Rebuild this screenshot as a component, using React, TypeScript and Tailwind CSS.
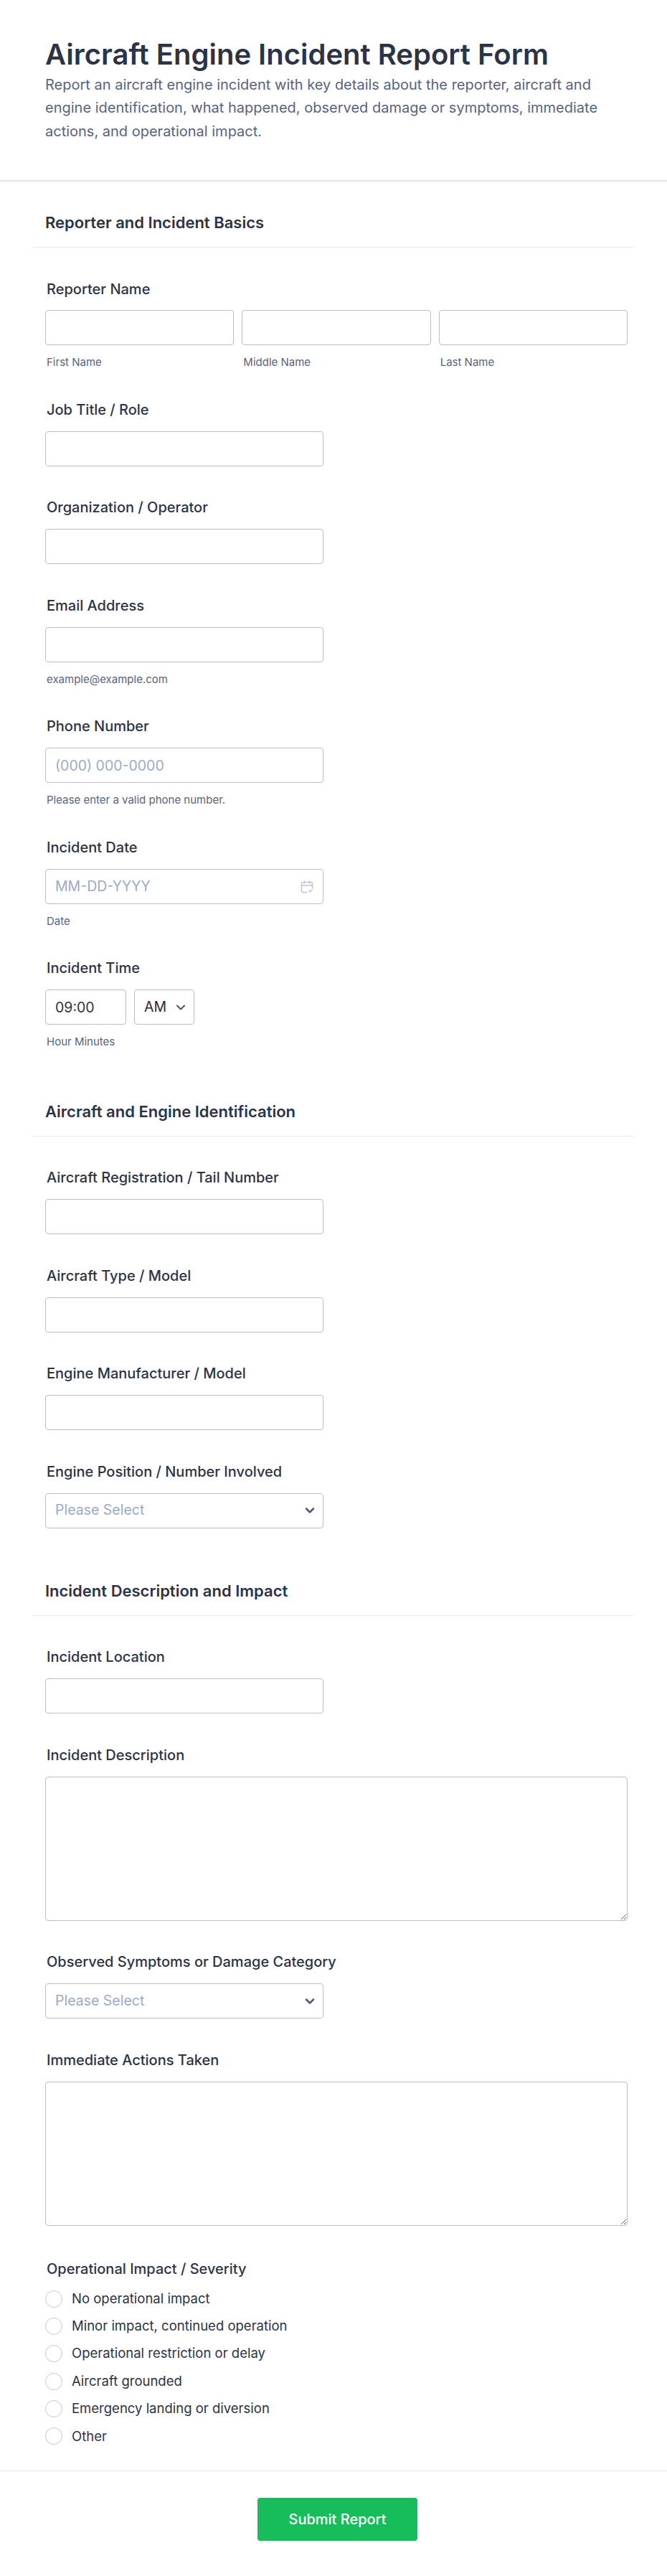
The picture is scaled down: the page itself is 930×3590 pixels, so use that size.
import { ChevronDown } from "lucide-react";

const inputClass =
  "block h-[49px] w-full rounded-[4px] border border-[#b8bdc9] bg-white px-[13px] text-[19.5px] text-[#2c3345] outline-none placeholder:text-[#9aacc4]";

function Label({ children }: { children: string }) {
  return (
    <div className="ml-[2px] h-[22px] whitespace-nowrap text-[20px] font-medium leading-[22px] text-[#2c3345]">
      {children}
    </div>
  );
}

function Hint({ children }: { children: string }) {
  return (
    <div className="ml-[2px] mt-[15px] h-[17px] text-[15px] leading-[17px] text-[#57647e]">
      {children}
    </div>
  );
}

function TextField({ label, hint, placeholder }: { label: string; hint?: string; placeholder?: string }) {
  return (
    <div className="w-[388px]">
      <Label>{label}</Label>
      <input type="text" placeholder={placeholder} className={`${inputClass} mt-[19px]`} />
      {hint && <Hint>{hint}</Hint>}
    </div>
  );
}

function SelectField({ label }: { label: string }) {
  return (
    <div className="w-[388px]">
      <Label>{label}</Label>
      <div className={`${inputClass} mt-[19px] flex items-center justify-between`}>
        <span className="text-[#9aacc4]">Please Select</span>
        <ChevronDown className="mr-[-5px] h-[20px] w-[20px] text-[#4d5871]" strokeWidth={3} />
      </div>
    </div>
  );
}

function TextareaField({ label }: { label: string }) {
  return (
    <div>
      <Label>{label}</Label>
      <textarea className="mt-[19px] block h-[201px] w-[812px] resize-y rounded-[4px] border border-[#b8bdc9] bg-white px-[13px] py-2 text-[20px] outline-none" />
    </div>
  );
}

function SectionHeading({ children }: { children: string }) {
  return (
    <div className="mx-[-17px] border-b border-[#e8eaf0] px-[17px] pb-[21px]">
      <h2 className="h-[26px] text-[22px] font-semibold leading-[26px] text-[#2c3345]">{children}</h2>
    </div>
  );
}

const impactOptions = [
  "No operational impact",
  "Minor impact, continued operation",
  "Operational restriction or delay",
  "Aircraft grounded",
  "Emergency landing or diversion",
  "Other",
];

export default function App() {
  return (
    <div className="min-h-[3590px] w-[930px] bg-white font-['Inter',sans-serif]">
      <header className="h-[253px] border-b-2 border-[#dfe3eb] px-[63px] pt-[50px]">
        <h1 className="h-[52px] text-[40px] font-semibold leading-[52px] text-[#2c3345]">
          Aircraft Engine Incident Report Form
        </h1>
        <p className="w-[790px] text-[20px] leading-[32.4px] text-[#57647e]">
          Report an aircraft engine incident with key details about the reporter, aircraft and engine
          identification, what happened, observed damage or symptoms, immediate actions, and operational impact.
        </p>
      </header>

      <main className="ml-[46px] w-[838px] px-[17px]">
        <section className="pt-[44px]">
          <SectionHeading>Reporter and Incident Basics</SectionHeading>
          <div className="mt-[47px]">
            <Label>Reporter Name</Label>
            <div className="mt-[18px] flex w-[812px] gap-[11px]">
              {["First Name", "Middle Name", "Last Name"].map((name) => (
                <div key={name} className="flex-1">
                  <input type="text" className={inputClass} />
                  <Hint>{name}</Hint>
                </div>
              ))}
            </div>
          </div>
          <div className="mt-[46.5px] flex flex-col gap-[46.5px]">
            <TextField label="Job Title / Role" />
            <TextField label="Organization / Operator" />
            <TextField label="Email Address" hint="example@example.com" />
            <TextField label="Phone Number" placeholder="(000) 000-0000" hint="Please enter a valid phone number." />
            <div className="relative w-[388px]">
              <TextField label="Incident Date" placeholder="MM-DD-YYYY" hint="Date" />
              <svg
                viewBox="0 0 18 18"
                fill="none"
                stroke="#bcc3d1"
                strokeWidth="1.4"
                strokeLinecap="round"
                strokeLinejoin="round"
                className="absolute right-[14px] top-[57px] h-[18px] w-[18px]"
              >
                <path d="M9 16.5H3.5a2 2 0 0 1-2-2V4.5a2 2 0 0 1 2-2h11a2 2 0 0 1 2 2V11" />
                <path d="M1.5 7h15M5.5 1v3M12.5 1v3M11.5 14.5l1.5 1.5 3-3" />
              </svg>
            </div>
            <div>
              <Label>Incident Time</Label>
              <div className="mt-[19px] flex gap-[11px]">
                <input type="text" defaultValue="09:00" className={`${inputClass} !w-[113px]`} />
                <div className={`${inputClass} flex !w-[84px] items-center justify-between`}>
                  <span className="text-[#1f2937]">AM</span>
                  <ChevronDown className="mr-[-5px] h-[20px] w-[20px] text-[#4d5871]" strokeWidth={2.5} />
                </div>
              </div>
              <Hint>Hour Minutes</Hint>
            </div>
          </div>
        </section>

        <section className="pt-[75.5px]">
          <SectionHeading>Aircraft and Engine Identification</SectionHeading>
          <div className="mt-[46.5px] flex flex-col gap-[46.5px]">
            <TextField label="Aircraft Registration / Tail Number" />
            <TextField label="Aircraft Type / Model" />
            <TextField label="Engine Manufacturer / Model" />
            <SelectField label="Engine Position / Number Involved" />
          </div>
        </section>

        <section className="pt-[74px]">
          <SectionHeading>Incident Description and Impact</SectionHeading>
          <div className="mt-[46.5px] flex flex-col gap-[46.5px]">
            <TextField label="Incident Location" />
            <TextareaField label="Incident Description" />
            <SelectField label="Observed Symptoms or Damage Category" />
            <TextareaField label="Immediate Actions Taken" />
            <div className="mt-[2.5px]">
              <Label>Operational Impact / Severity</Label>
              <div className="mt-[19px] flex flex-col gap-[14.4px]">
                {impactOptions.map((option) => (
                  <label key={option} className="flex h-[24px] items-center gap-[13px] text-[18.5px] text-[#2c3345]">
                    <span className="h-[24px] w-[24px] rounded-full border border-[#c3c8d6] bg-white" />
                    {option}
                  </label>
                ))}
              </div>
            </div>
          </div>
        </section>
      </main>

      <footer className="mt-[36px] flex justify-center border-t border-[#e3e5ea] pl-[11px] pt-[37px]">
        <button
          type="button"
          className="h-[60px] w-[223px] rounded-[4px] bg-[#18bd5b] text-[20px] font-medium text-white"
        >
          Submit Report
        </button>
      </footer>
    </div>
  );
}
